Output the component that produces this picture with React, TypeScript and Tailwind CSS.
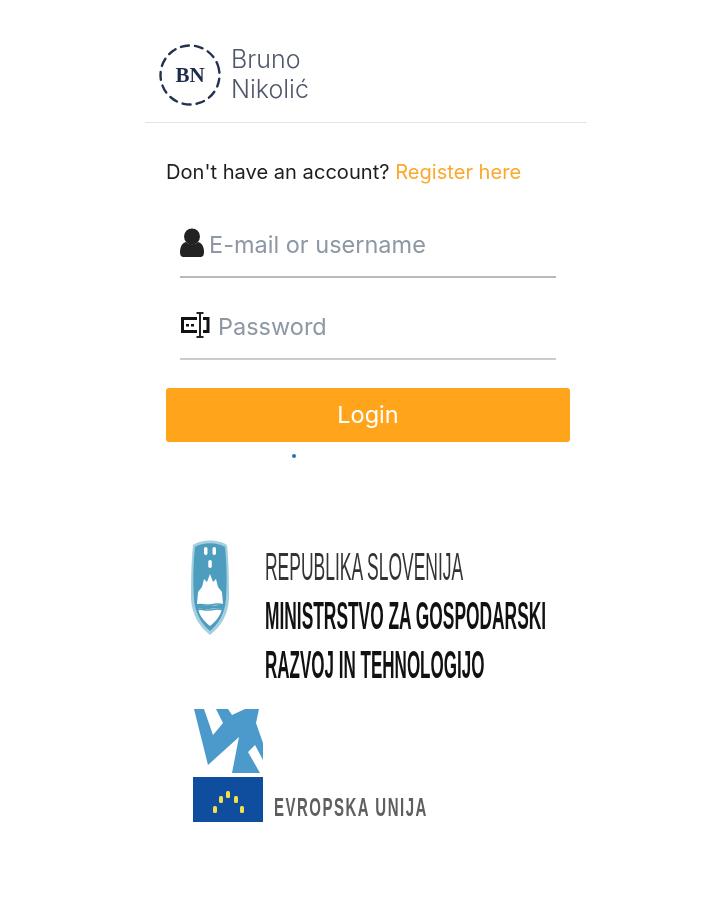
import React from "react";

const font = "font-['Inter','Liberation_Sans',Arial,sans-serif]";
const logoFont = "font-['Liberation_Sans',Arial,sans-serif]";

function BrandMark() {
  return (
    <svg width="64" height="64" viewBox="0 0 64 64" className="shrink-0">
      <circle cx="32" cy="32" r="29.500" fill="none" stroke="#24324f" strokeWidth="2.400" strokeDasharray="8 6" strokeLinecap="round" transform="rotate(-20 32 32)" />
      <text x="32" y="38.500" textAnchor="middle" fontFamily="'Liberation Serif', serif" fontWeight="700" fontSize="21" fill="#1d2a4a">BN</text>
    </svg>
  );
}

function UserIcon() {
  return (
    <svg width="24" height="30" viewBox="0 0 24 30" className="shrink-0">
      <circle cx="12" cy="8.500" r="8" fill="#222" />
      <path d="M0 24c0-5 2-9 6-10 3 3 9 3 12 0 4 1 6 5 6 10 0 3-1 5-4 5H4c-3 0-4-2-4-5z" fill="#222" />
    </svg>
  );
}

function PasswordIcon() {
  return (
    <svg width="30" height="30" viewBox="0 0 30 30" className="shrink-0">
      <path d="M17 8.500H2.500v13H17M23 8.500h5v13h-5" fill="none" stroke="#111" strokeWidth="3" />
      <path d="M16.500 3h7M20 3v24M16.500 27h7" fill="none" stroke="#222" strokeWidth="2" />
      <rect x="6" y="14" width="3" height="2.500" fill="#111" />
      <rect x="11" y="14" width="3" height="2.500" fill="#111" />
    </svg>
  );
}

function CoatOfArms() {
  return (
    <svg width="38" height="96" viewBox="0 0 38 96" className="shrink-0">
      <path d="M2 6C10 0 28 0 36 6c2 18 2 40 2 54-1 17-9 28-19 36C9 88 1 77 0 60 0 46 0 24 2 6z" fill="#a5cfdf" />
      <path d="M4 8C12 3 26 3 34 8c2 18 2 38 1 52-1 15-8 25-16 32C11 85 4 75 3 60 2 46 2 26 4 8z" fill="#4d9dbf" />
      <path d="M7 70c4-1 8 1 12 0s8-1 12 0c-2 8-7 13-12 17-5-4-10-9-12-17z" fill="#fff" />
      <path d="M6 65L7 53l4-5 2-8 3 3 3-8 3 8 3-3 2 8 4 5 1 12c-4 1-8 2-13 1-5 1-9 0-13-1z" fill="#fff" />
      <path d="M5 66c5-2 9 1 14 0s9-2 14 0M6 71c5-2 8 1 13 0s9-2 13 0" fill="none" stroke="#4d9dbf" strokeWidth="1.300" />
      <rect x="13" y="8" width="3.500" height="8" rx="1.700" fill="#fff" />
      <rect x="21.500" y="8" width="3.500" height="8" rx="1.700" fill="#fff" />
      <rect x="17.300" y="21" width="3.500" height="8" rx="1.700" fill="#fff" />
    </svg>
  );
}

function EuMark() {
  const stars = [[22, 29], [28, 19], [35, 14], [43, 19], [49, 29]];
  return (
    <svg width="71" height="115" viewBox="0 0 71 115" className="shrink-0">
      <path d="M1 1h10l9 26 10-12-7-14h12l4 6 13-6h14l-3 14 7 20v17l-8-15-7 7 12 21H39l7-36-31 28z" fill="#4c9acb" />
      <rect x="0" y="69" width="70" height="45" fill="#0f4e9e" />
      {stars.map(([x, y]) => (
        <rect key={x} x={x - 2} y={69 + y} width="4" height="7" rx="1.500" fill="#f3e04a" />
      ))}
    </svg>
  );
}

function Field({ icon, label, gap, border }: { icon: React.ReactNode; label: string; gap: string; border: string }) {
  return (
    <div className={`flex h-[62px] w-[376px] items-center ${gap} border-b-2 ${border} pb-[7px]`}>
      {icon}
      <span className="pt-[5px] text-[23.500px] leading-none text-[#8d98a4]">{label}</span>
    </div>
  );
}

export default function App() {
  return (
    <div className={`${font} h-[900px] w-[721px] overflow-hidden bg-white pl-[145px] blur-[0.5px]`}>
      <div className="w-[442px]">
        <header className="flex h-[123px] items-start gap-[8px] border-b border-[#e4e4e4] pl-[13px] pt-[43px]">
          <BrandMark />
          <div className="pl-[1px] pt-[1px] text-[25px] font-light leading-[30px] text-[#4f586b]">
            <div>Bruno</div>
            <div>Nikolić</div>
          </div>
        </header>

        <main className="pl-[21px]">
          <p className="mt-[37px] text-[20.100px] leading-6 text-[#1e1e1e]">
            Don't have an account? <span className="text-[#fba92c]">Register here</span>
          </p>

          <div className="ml-[14px] mt-[32px] flex flex-col gap-[20px]">
            <Field icon={<UserIcon />} label="E-mail or username" gap="gap-[5px]" border="border-[#b4bac0]" />
            <Field icon={<PasswordIcon />} label="Password" gap="gap-[8px]" border="border-[#c9cdd0]" />
          </div>

          <button className="mt-[28px] block h-[54px] w-[404px] rounded-[3px] bg-[#ffa41b] text-[23.500px] text-white">Login</button>
          <div className="ml-[126px] mt-[12px] h-1 w-1 rounded-full bg-[#2f6db5]" />

          <section className={`${logoFont} ml-[25px] mt-[81px] flex items-start gap-[36px]`}>
            <CoatOfArms />
            <div className="w-[284px] pt-[5px] text-[#111]">
              <div className="h-[49px] origin-left scale-x-[0.46] whitespace-nowrap text-[38px] leading-[46px] text-[#333]">REPUBLIKA SLOVENIJA</div>
              <div className="h-[49px] origin-left scale-x-[0.457] whitespace-nowrap text-[38px] font-bold leading-[46px]">MINISTRSTVO ZA GOSPODARSKI</div>
              <div className="h-[49px] origin-left scale-x-[0.448] whitespace-nowrap text-[38px] font-bold leading-[46px]">RAZVOJ IN TEHNOLOGIJO</div>
            </div>
          </section>

          <section className={`${logoFont} ml-[27px] mt-[17px] flex items-end gap-[10px]`}>
            <EuMark />
            <span className="origin-left scale-x-[0.6] whitespace-nowrap pb-[1px] text-[25px] font-bold leading-[30px] tracking-[0.1em] text-[#5f5f5f]">EVROPSKA UNIJA</span>
          </section>
        </main>
      </div>
    </div>
  );
}
